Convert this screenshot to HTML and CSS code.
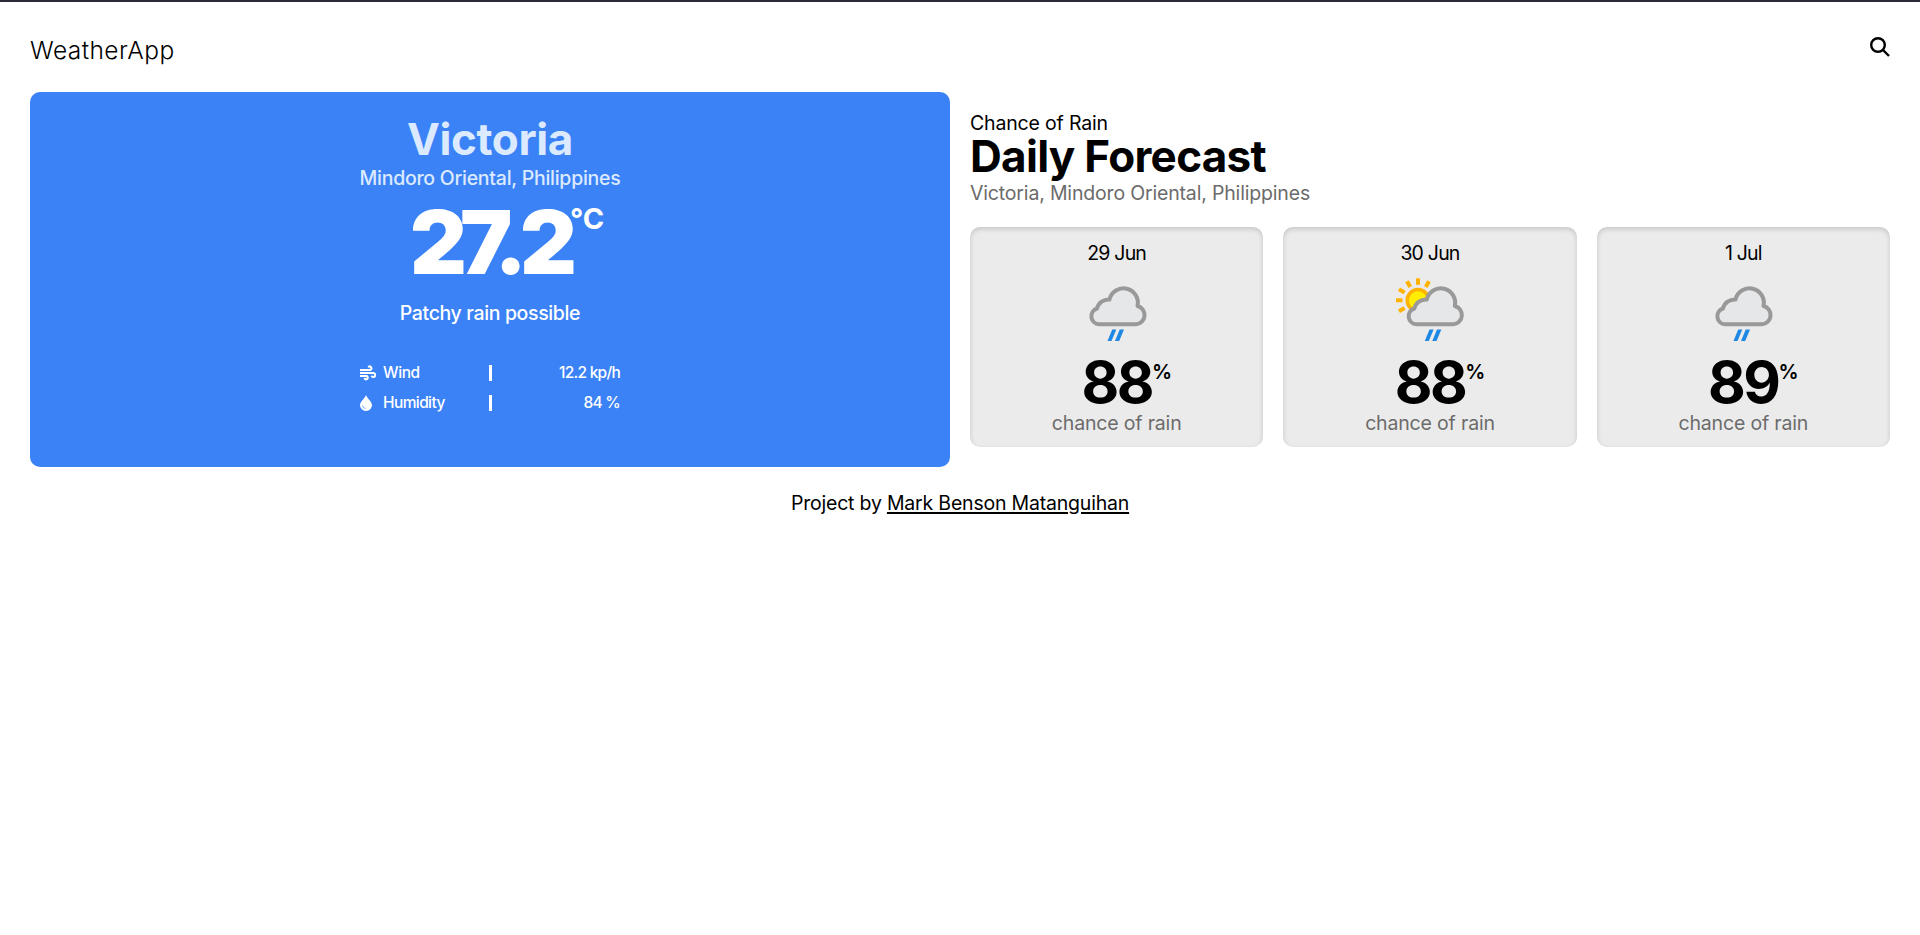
FILE: index.html
```html
<!DOCTYPE html>
<html lang="en">
<head>
<meta charset="utf-8">
<title>WeatherApp</title>
<link rel="stylesheet" href="styles.css">
</head>
<body>
<svg width="0" height="0" class="defs">
  <defs>
    <g id="cloud">
      <path d="M9.500 36.300A8.100 8.100 0 0 1 7.500 20.500A12 12 0 0 1 20 11.500A14.250 14.250 0 0 1 48 18A9.300 9.300 0 0 1 46.500 36.300Z" fill="#e6e7e9" stroke="#999" stroke-width="4" stroke-linejoin="round"/>
      <path d="M18 53L22.700 41.500H26.800L22 53ZM25.500 53L30.200 41.500H34.500L29.700 53Z" fill="#1e88e5"/>
    </g>
  </defs>
</svg>
<header class="header">
  <div class="brand">WeatherApp</div>
  <svg class="search" viewBox="0 0 20 20"><circle cx="8" cy="8" r="6.800"/><path d="M13 13L19 19"/></svg>
</header>
<main class="main">
  <section class="current">
    <h1 class="city">Victoria</h1>
    <p class="region">Mindoro Oriental, Philippines</p>
    <div class="temp"><span class="degrees">27.2</span><span class="unit">°C</span></div>
    <p class="condition">Patchy rain possible</p>
    <div class="stats">
      <svg class="wind" viewBox="0 0 16 16"><path d="M.5 5H9M.5 8H13.500A2 2 0 1 1 12 11.500M8.800 1.600A1.700 1.700 0 1 1 10.300 5M.5 11H6.500A1.700 1.700 0 1 1 4.800 13.800"/></svg>
      <span class="label wide">Wind</span><i class="bar"></i><span class="value">12.2 kp/h</span>
      <svg class="drop" viewBox="0 0 12 16"><path d="M6 0C7 3.500 12 6.500 12 10.300A6 5.700 0 0 1 0 10.300C0 6.500 5 3.500 6 0Z" fill="#fff"/><path d="M2.500 10.500Q3 13 5.500 13.500" fill="none" stroke="#6fa4f8"/></svg>
      <span class="label">Humidity</span><i class="bar"></i><span class="value">84 %</span>
    </div>
  </section>
  <section class="forecast">
    <p class="kicker">Chance of Rain</p>
    <h2 class="title">Daily Forecast</h2>
    <p class="place">Victoria, Mindoro Oriental, Philippines</p>
    <div class="days">
      <article class="day">
        <p class="date">29 Jun</p>
        <svg class="icon" viewBox="0 0 76 76"><use href="#cloud" x="10.500" y="16"/></svg>
        <div class="chance">88<span class="percent">%</span></div>
        <p class="note">chance of rain</p>
      </article>
      <article class="day">
        <p class="date">30 Jun</p>
        <svg class="icon" viewBox="0 0 76 76">
          <g transform="translate(26 28.300)">
            <circle r="10.800" fill="#ffee00" stroke="#ffb300" stroke-width="3.500"/>
            <path d="M0-15.500V-22" class="ray"/>
            <path d="M0-15.500V-22" class="ray" transform="rotate(30)"/>
            <path d="M0-15.500V-22" class="ray" transform="rotate(-30)"/>
            <path d="M0-15.500V-22" class="ray" transform="rotate(-60)"/>
            <path d="M0-15.500V-22" class="ray" transform="rotate(-90)"/>
            <path d="M0-15.500V-22" class="ray" transform="rotate(-120)"/>
          </g>
          <use href="#cloud" x="14.800" y="16"/>
        </svg>
        <div class="chance">88<span class="percent">%</span></div>
        <p class="note">chance of rain</p>
      </article>
      <article class="day">
        <p class="date">1 Jul</p>
        <svg class="icon" viewBox="0 0 76 76"><use href="#cloud" x="10.500" y="16"/></svg>
        <div class="chance">89<span class="percent">%</span></div>
        <p class="note">chance of rain</p>
      </article>
    </div>
  </section>
</main>
<footer class="footer">Project by <a href="#">Mark Benson Matanguihan</a></footer>
</body>
</html>
```
FILE: styles.css
```css
* { box-sizing: border-box; margin: 0; padding: 0; }
body { background: #fff; color: #000; font-family: Inter, "Liberation Sans", sans-serif; font-size: 19.5px; line-height: 24px; letter-spacing: -.17px; border-top: 2px solid #2b2a3a; }
.defs { position: absolute; }
.header { display: flex; justify-content: space-between; align-items: flex-start; height: 90px; padding: 33px 30px 0; }
.brand { font-size: 24.5px; line-height: 30px; font-weight: 350; letter-spacing: .45px; }
.search { width: 20px; height: 20px; margin-top: 2px; fill: none; stroke: #000; stroke-width: 2.4; }
.main { display: grid; grid-template-columns: 1fr 1fr; gap: 20px; padding: 0 30px; }
.current { display: flex; flex-direction: column; align-items: center; height: 375px; padding-top: 22px; border-radius: 10px; background: #3b82f6; color: #fff; font-weight: 500; }
.city { color: #dbeafe; font-size: 44px; line-height: 50px; font-weight: 700; letter-spacing: -.4px; }
.region { margin-top: 2px; color: #dbeafe; letter-spacing: -.26px; }
.temp { position: relative; margin-top: 7px; font-size: 88px; line-height: 90px; font-weight: 900; }
.degrees { letter-spacing: -7px; }
.unit { position: absolute; left: 100%; top: 5px; font-size: 29px; line-height: 34px; font-weight: 700; letter-spacing: 0; }
.condition { margin-top: 14px; letter-spacing: -.36px; }
.stats { display: grid; grid-template-columns: 23px 106px 3px 1fr; grid-auto-rows: 30px; align-items: center; width: 260px; margin-top: 33px; font-size: 15.5px; line-height: 30px; }
.wind { width: 16px; height: 16px; fill: none; stroke: #fff; stroke-width: 2.1; stroke-linecap: round; }
.drop { width: 12px; height: 16px; }
.bar { height: 16px; background: #fff; }
.label { letter-spacing: -.6px; }
.label.wide { letter-spacing: -.4px; }
.value { text-align: right; letter-spacing: -.75px; }
.forecast { padding-top: 20px; }
.kicker { line-height: 23px; }
.title { font-size: 44px; line-height: 43px; font-weight: 700; letter-spacing: -.7px; }
.place { margin-top: 3px; color: #6b6b6b; }
.days { display: grid; grid-template-columns: repeat(3, 1fr); gap: 20px; margin-top: 22px; }
.day { display: flex; flex-direction: column; align-items: center; height: 220px; padding-top: 14px; border-radius: 10px; background: #ebebeb; box-shadow: inset 0 2px 5px rgba(0, 0, 0, .16); }
.date { letter-spacing: -.8px; }
.icon { width: 76px; height: 76px; margin-top: 7px; }
.ray { stroke: #ffb300; stroke-width: 4; }
.chance { position: relative; margin-top: 4px; font-size: 58px; line-height: 60px; font-weight: 700; letter-spacing: -2.5px; }
.percent { position: absolute; left: 100%; top: 8px; font-size: 20px; line-height: 24px; font-weight: 600; letter-spacing: 0; }
.note { margin-top: -1px; color: #6b6b6b; }
.footer { margin-top: 24px; text-align: center; letter-spacing: -.2px; }
.footer a { color: inherit; text-decoration: underline; text-decoration-thickness: 2px; text-underline-offset: 2px; }
```
